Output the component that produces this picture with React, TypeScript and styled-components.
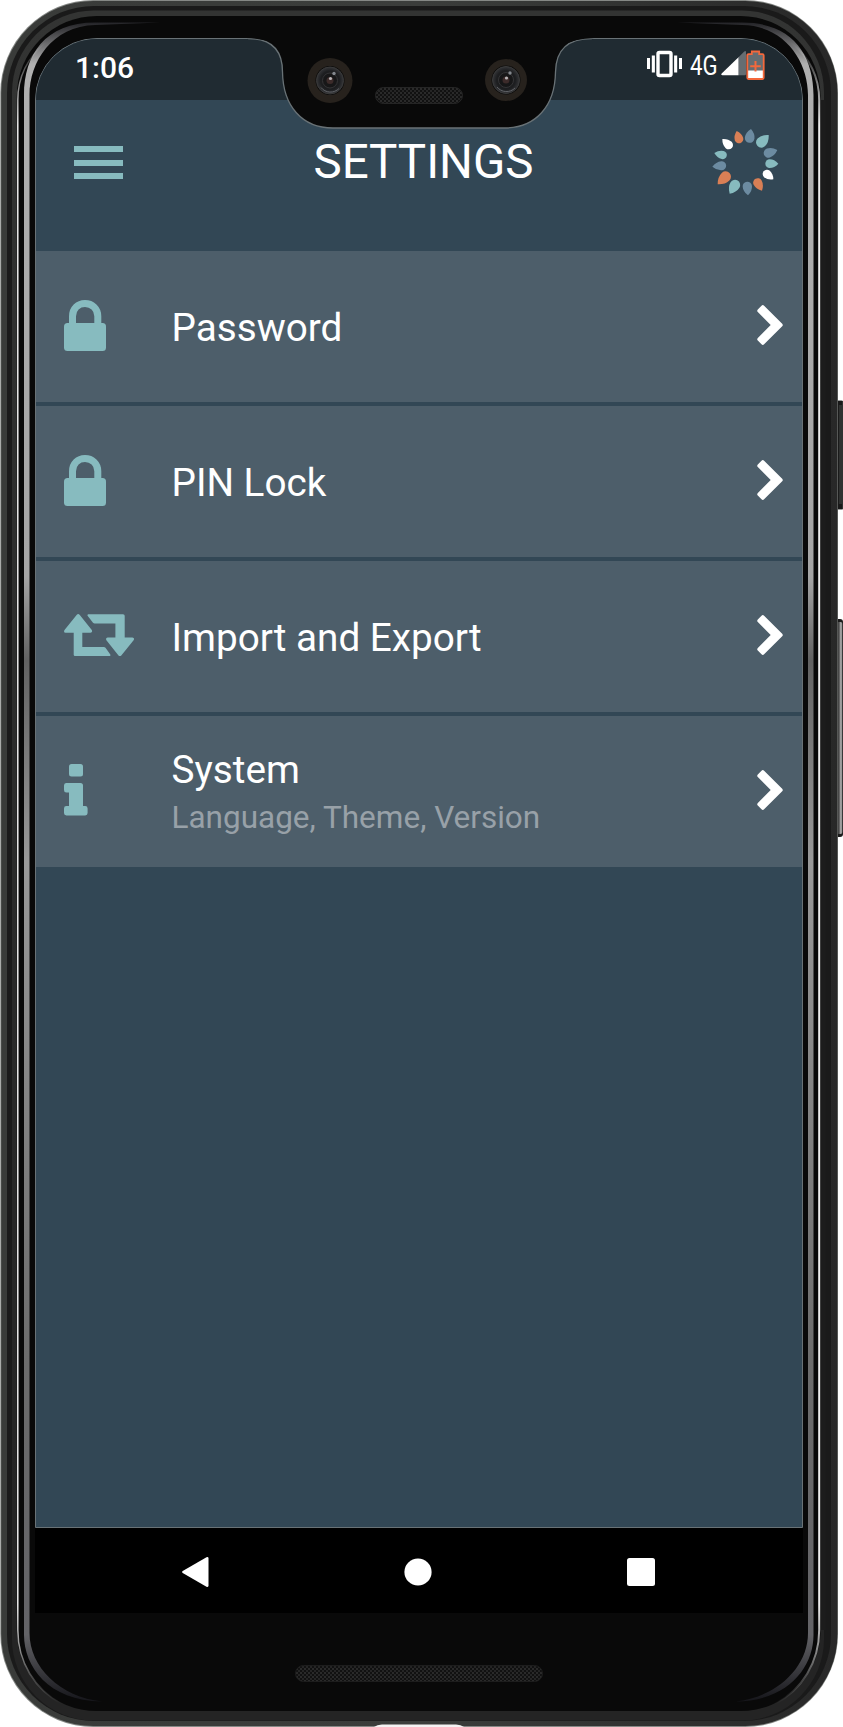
import React from "react";
import styled, { createGlobalStyle } from "styled-components";

const teal = "#87bbbf";

const GlobalStyle = createGlobalStyle`
  *, *::before, *::after { box-sizing: border-box; }
  html, body { margin: 0; padding: 0; background: #fff; }
  body { font-family: Roboto, "Liberation Sans", sans-serif; overflow: hidden; }
  svg { display: block; flex: none; }
`;

const Phone = styled.main`
  position: relative;
  width: 843px;
  height: 1727px;
  padding: 38px 40px 0 35px;
  overflow: hidden;
`;

const FrameArt = styled.svg`
  position: absolute;
  inset: 0;
  pointer-events: none;
`;

const Screen = styled.div`
  position: relative;
  display: flex;
  flex-direction: column;
  height: 1490px;
  border: 1px solid #697276;
  border-radius: 62px 62px 0 0;
  overflow: hidden;
  background: #324755;
`;

const StatusBar = styled.div`
  display: flex;
  justify-content: space-between;
  height: 61px;
  flex: none;
  padding: 11px 37px 0 39px;
  background: #202b32;
  color: #fff;
`;

const Clock = styled.time`
  font-size: 30px;
  line-height: 36px;
  font-weight: 500;
`;

const StatusIcons = styled.div`
  display: flex;
  align-items: flex-start;
`;

const Network = styled.span`
  width: 31px;
  margin-left: 7px;
  font-size: 27px;
  line-height: 32px;
  transform: scaleX(0.82);
  transform-origin: left;
  white-space: nowrap;
`;

const Header = styled.header`
  display: flex;
  align-items: flex-start;
  justify-content: space-between;
  height: 151px;
  flex: none;
  padding: 27px 22px 0 38px;
`;

const MenuButton = styled.button`
  display: flex;
  flex-direction: column;
  gap: 7.5px;
  width: 49px;
  margin: 19px 0 0;
  padding: 0;
  border: 0;
  background: none;
`;

const MenuBar = styled.span`
  height: 6px;
  background: ${teal};
`;

const Title = styled.h1`
  margin: 6px 0 0 14px;
  font-size: 47.5px;
  line-height: 58px;
  font-weight: 400;
  color: #fff;
`;

const List = styled.ul`
  display: flex;
  flex-direction: column;
  gap: 4px;
  margin: 0;
  padding: 0;
  list-style: none;
`;

const Row = styled.li`
  display: flex;
  align-items: center;
  height: 151px;
  padding: 0 19px 3px 28px;
  background: #4d5e6a;
  color: #fff;
`;

const IconCell = styled.span`
  width: 107.5px;
  flex: none;
  color: ${teal};
`;

const Labels = styled.div`
  flex: 1;
  padding-top: 6px;
`;

const Label = styled.div`
  font-size: 38.7px;
  line-height: 48px;
`;

const Sublabel = styled.div`
  font-size: 31.5px;
  line-height: 47px;
  color: #98a1a8;
`;

const NavBar = styled.nav`
  position: relative;
  display: flex;
  justify-content: space-between;
  align-items: center;
  height: 85px;
  padding: 3px 148px 0 147px;
  background: #000;
`;

const LockIcon = () => (
  <svg width="42" height="51" viewBox="0 0 42 51">
    <rect y="23" width="42" height="28" rx="3.5" fill="currentColor" />
    <path d="M8.5 25V16.2C8.5 8.6 14 3.5 21 3.5S33.8 8.6 33.8 16.2V25" fill="none" stroke="currentColor" strokeWidth="7" />
  </svg>
);

const TransferIcon = () => (
  <svg width="70" height="42" viewBox="0 0 70 42" fill="currentColor">
    <path d="M12.8.8q1.4-1.4 2.8 0L27.8 16q1.1 2.4-1.4 2.8h-8.1V33h21.5q1 0 1.7.8l4.8 6.6q.6 1.4-.7 1.6H11q-1.3 0-1.3-1.3V18.8H1.6Q-.8 18.3.5 16z" />
    <path d="M24.2.2H59q1.7 0 1.7 1.5v21.7h7.8q2.4.6 1.1 2.8L57.3 41.4q-1.4 1.2-2.8 0L42.4 26.2q-1.1-2.2 1.2-2.8h7.8V9.5H30.7q-1 0-1.7-.8l-5.4-7q-.6-1 .6-1.5z" />
  </svg>
);

const InfoIcon = () => (
  <svg width="24" height="52" viewBox="0 0 24 52" fill="currentColor">
    <rect x="5" width="14" height="12.5" rx="2.5" />
    <path d="M2 19h14.5Q19 19 19 21.5V42h2.2q2.4 0 2.4 2.4v4.7q0 2.4-2.4 2.4H2.4Q0 51.500 0 49.100V44.400Q0 42 2.400 42H5V28.500H2.400Q0 28.500 0 26V21.500Q0 19 2 19z" />
  </svg>
);

const ChevronIcon = () => (
  <svg width="26" height="40" viewBox="0 0 26 40">
    <path d="M4.500.7q1.300-1.200 2.600 0L25.200 18.700q1.200 1.300 0 2.600L7.100 39.300q-1.300 1.200-2.600 0L.8 35.600q-1.200-1.300 0-2.600L13.700 20 .8 7q-1.200-1.300 0-2.600z" fill="#fff" />
  </svg>
);

const VibrateIcon = () => (
  <svg width="36" height="28" viewBox="0 0 36 28" fill="#fff">
    <path d="M0 8h3v11H0zM4.800 5.500h3.100v17H4.800zM27.100 5.500h3.100v17h-3.100zM32 8h3v11h-3z" />
    <rect x="11" y="2.500" width="13" height="23" rx="1.500" fill="none" stroke="#fff" strokeWidth="3.400" />
  </svg>
);

const SignalIcon = () => (
  <svg width="25" height="26" viewBox="0 0 25 26">
    <path d="M17.500 7.200L23 1.700q2-1.500 2 .6V24q0 1.300-1.300 1.300h-6.200z" fill="#656d72" />
    <path d="M17.500 7.200V25.300H1.500Q-.5 25 .7 23.500z" fill="#fff" />
  </svg>
);

const BatteryIcon = () => (
  <svg width="19" height="31" viewBox="0 0 19 31">
    <path d="M1.200 5H5.500V1.500h8V5h4.300v24H1.200z" fill="#656d72" />
    <path d="M1.500 20.500h16V28h-16z" fill="#fff" />
    <path d="M2.500 4.200H5.800V1.500h7.400v2.700h3.300q1.200 0 1.200 1.200v22.400q0 1.200-1.200 1.200h-14q-1.200 0-1.200-1.200V5.400q0-1.200 1.200-1.200z" fill="none" stroke="#f4683c" strokeWidth="1.800" />
    <path d="M9.500 11v10.500M4.200 16.300h10.600" stroke="#f4683c" strokeWidth="2" />
  </svg>
);

const blue = "#6c8ba1";
const orange = "#d97f55";

/* Each petal: tip x, tip y, centre of the round end x, y, radius, fill */
const petals: [number, number, number, number, number, string][] = [
  [80, 12, 87, 36, 13, orange],
  [123, 6, 119, 33, 14.5, blue],
  [176, 24, 154, 46, 16, teal],
  [202, 69, 175, 78, 14, blue],
  [205, 110, 179, 110, 13, teal],
  [190, 157, 171, 141, 13, "#fff"],
  [156, 191, 143, 167, 13.5, orange],
  [114, 205, 112, 178, 14, blue],
  [59, 200, 75, 174, 15.5, teal],
  [23, 172, 47, 149, 16, orange],
  [7, 119, 35, 116, 13.5, blue],
  [13, 78, 38, 84, 12.5, teal],
  [37, 36, 56, 54, 13, "#fff"],
];

const LogoIcon = () => (
  <svg width="70" height="70" viewBox="0 0 210 210">
    {petals.map(([tx, ty, cx, cy, r, fill], i) => {
      const len = Math.hypot(tx - cx, ty - cy);
      const angle = (Math.atan2(ty - cy, tx - cx) * 180) / Math.PI;
      return (
        <path
          key={i}
          transform={`translate(${cx} ${cy}) rotate(${angle})`}
          d={`M${len} 0Q${len * 0.55} ${-r} 0 ${-r}A${r} ${r} 0 0 0 0 ${r}Q${len * 0.55} ${r} ${len} 0z`}
          fill={fill}
        />
      );
    })}
  </svg>
);

const rimPath =
  "M160 22.500H95C45 22.500 24 55 24 95V1635C24 1666 48 1701 102 1701.500C60 1697 29.500 1667 29.500 1633V95C29.500 62 52 26 95 25z";
const edgePath = "M46 42C27 58 17.800 78 17.800 100V1630C17.800 1662 35 1690 62 1704";

const Body = () => (
  <FrameArt width="843" height="1727" viewBox="0 0 843 1727">
    <defs>
      <linearGradient id="button" x1="0" x2="1" y1="0" y2="0">
        <stop offset="0" stopColor="#222" />
        <stop offset="0.45" stopColor="#555" />
        <stop offset="0.75" stopColor="#bbb" />
        <stop offset="1" stopColor="#555" />
      </linearGradient>
      <linearGradient id="shell" gradientUnits="userSpaceOnUse" x1="0" x2="838" y1="0" y2="0">
        <stop offset="0" stopColor="#393b39" />
        <stop offset="0.5" stopColor="#3b3d3b" />
        <stop offset="1" stopColor="#282828" />
      </linearGradient>
      <linearGradient id="rim" gradientUnits="userSpaceOnUse" x1="0" x2="0" y1="22" y2="1702">
        <stop offset="0" stopColor="#222226" />
        <stop offset="0.025" stopColor="#b0b0b0" />
        <stop offset="0.33" stopColor="#a5a5a5" />
        <stop offset="0.38" stopColor="#626262" />
        <stop offset="0.5" stopColor="#999" />
        <stop offset="0.8" stopColor="#6c6c6c" />
        <stop offset="0.96" stopColor="#636367" />
        <stop offset="1" stopColor="#15151a" />
      </linearGradient>
      <linearGradient id="edge" gradientUnits="userSpaceOnUse" x1="0" x2="0" y1="42" y2="1704">
        <stop offset="0" stopColor="#fff" stopOpacity="0" />
        <stop offset="0.05" stopColor="#eee" />
        <stop offset="0.94" stopColor="#eee" />
        <stop offset="1" stopColor="#fff" stopOpacity="0" />
      </linearGradient>
      <linearGradient id="bandShade" x1="0" x2="0" y1="0" y2="1">
        <stop offset="0" stopColor="#333433" />
        <stop offset="0.95" stopColor="#242424" />
      </linearGradient>
    </defs>
    <rect x="834" y="400.500" width="9.500" height="109" rx="2" fill="#303231" />
    <path d="M838.500 401v108" stroke="#1b1b1b" />
    <path d="M837 401h5v4h-5zM837 504h5v5h-5z" fill="#191919" />
    <rect x="834" y="619" width="9" height="218" rx="3" fill="#1c1c1c" />
    <rect x="836.500" y="622" width="6" height="212" rx="2" fill="url(#button)" />
    <rect x=".3" y="0" width="837.700" height="1727" rx="93" fill="#858885" />
    <rect x="1.200" y="1" width="836.300" height="1725" rx="92" fill="url(#shell)" />
    <rect x="7" y="6" width="824" height="1715" rx="87" fill="#1a1a1a" />
    <rect x="12" y="10.500" width="812" height="1710" rx="82" fill="url(#bandShade)" />
    <rect x="820.500" y="100" width="5" height="1530" fill="#1c1c1c" />
    <rect x="16.800" y="16" width="803.700" height="1695" rx="80" fill="#090909" />
    <path d={rimPath} fill="url(#rim)" />
    <path d={rimPath} transform="translate(837.500 0) scale(-1 1)" fill="url(#rim)" />
    <path d={edgePath} fill="none" stroke="url(#edge)" strokeWidth="1.500" />
    <path d={edgePath} transform="translate(837 0) scale(-1 1)" fill="none" stroke="url(#edge)" strokeWidth="2" />
    <path d="M374 1727q3-2.500 8-2.500h74q5 0 8 2.500z" fill="#f4f2f2" />
  </FrameArt>
);

const Lens = ({ x, y, r }: { x: number; y: number; r: number }) => (
  <g transform={`translate(${x} ${y})`}>
    <circle r={r} fill="#27221d" />
    <circle r="14.500" fill="#0b0b0b" />
    <circle r="13.500" fill="url(#glass)" stroke="#3a3a3a" />
    <circle r="7.500" fill="#171718" stroke="#343436" />
    <circle r="3.500" fill="#3c2b2a" />
    <circle cx="0.500" cy="-2" r="1.600" fill="#b8b4b6" />
    <circle cx="4" cy="-7" r="1.700" fill="#84888e" />
    <path d="M-9 7A12 12 0 0 0 9 8" fill="none" stroke="#606266" />
  </g>
);

const Hardware = () => (
  <FrameArt width="843" height="1727" viewBox="0 0 843 1727">
    <defs>
      <pattern id="mesh" width="4" height="4" patternUnits="userSpaceOnUse">
        <rect width="4" height="4" fill="#111" />
        <circle cx="1" cy="1" r=".8" fill="#4a4a4a" />
        <circle cx="3" cy="3" r=".8" fill="#3e3e3e" />
      </pattern>
      <radialGradient id="glass">
        <stop offset="0" stopColor="#1a1a1a" />
        <stop offset="0.7" stopColor="#1d1e20" />
        <stop offset="1" stopColor="#343538" />
      </radialGradient>
    </defs>
    <path d="M248 38.500C272 38.500 282.500 50 282.500 72C283 106 302 128 333 128H504C536 128 555 106 555.500 72C556 50 567 38.500 592 38.500" fill="#090909" stroke="#697276" strokeWidth="1.300" />
    <path d="M246 32h348v6q-20 1-28 6H274q-8-5-28-6z" fill="#090909" />
    <Lens x={330} y={80.500} r={22.500} />
    <Lens x={506} y={80} r={21} />
    <rect x="375.500" y="87.500" width="87" height="16" rx="8" fill="url(#mesh)" stroke="#252525" />
    <rect x="295.500" y="1665.500" width="247" height="16" rx="8" fill="url(#mesh)" stroke="#1d1d1d" />
  </FrameArt>
);

const settings = [
  { label: "Password", icon: <LockIcon /> },
  { label: "PIN Lock", icon: <LockIcon /> },
  { label: "Import and Export", icon: <TransferIcon /> },
  { label: "System", detail: "Language, Theme, Version", icon: <InfoIcon /> },
];

export default function App() {
  return (
    <>
      <GlobalStyle />
      <Phone>
        <Body />
        <Screen>
          <StatusBar>
            <Clock>1:06</Clock>
            <StatusIcons>
              <VibrateIcon />
              <Network>4G</Network>
              <SignalIcon />
              <BatteryIcon />
            </StatusIcons>
          </StatusBar>
          <Header>
            <MenuButton aria-label="Menu">
              <MenuBar />
              <MenuBar />
              <MenuBar />
            </MenuButton>
            <Title>SETTINGS</Title>
            <LogoIcon />
          </Header>
          <List>
            {settings.map(({ label, detail, icon }) => (
              <Row key={label}>
                <IconCell>{icon}</IconCell>
                <Labels>
                  <Label>{label}</Label>
                  {detail && <Sublabel>{detail}</Sublabel>}
                </Labels>
                <ChevronIcon />
              </Row>
            ))}
          </List>
        </Screen>
        <NavBar>
          <svg width="27" height="30" viewBox="0 0 27 30">
            <path d="M24.500.3q2-.8 2 1.200v27q0 2-2 1.200L.7 16q-1.200-1 0-2z" fill="#fff" />
          </svg>
          <svg width="28" height="28" viewBox="0 0 28 28">
            <circle cx="14" cy="14" r="13.600" fill="#fff" />
          </svg>
          <svg width="28" height="28" viewBox="0 0 28 28">
            <rect width="28" height="28" rx="2.500" fill="#fff" />
          </svg>
        </NavBar>
        <Hardware />
      </Phone>
    </>
  );
}
